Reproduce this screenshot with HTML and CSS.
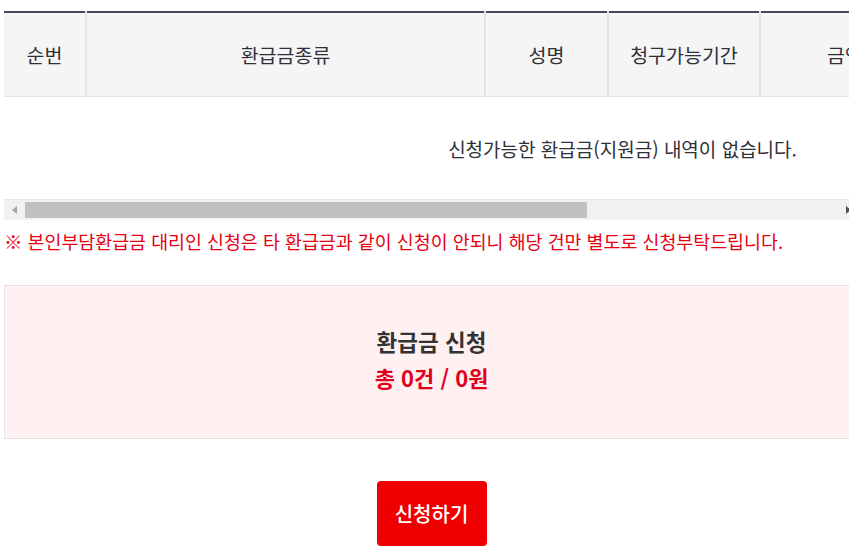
FILE: index.html
```html
<!DOCTYPE html>
<html lang="ko">
<head>
  <meta charset="UTF-8" />
  <meta name="viewport" content="width=device-width, initial-scale=1.0"/>
  <title>환급금 신청</title>
  <link rel="stylesheet" href="styles.css">
</head>
<body>
  <div class="contenedor">
    <div class="tabla-scroll">
      <table class="tabla">
        <colgroup>
          <col style="width:82px">
          <col style="width:399px">
          <col style="width:123px">
          <col style="width:152px">
          <col style="width:170px">
          <col style="width:150px">
          <col style="width:161px">
        </colgroup>
        <thead>
          <tr>
            <th>순번</th>
            <th>환급금종류</th>
            <th>성명</th>
            <th>청구가능기간</th>
            <th>금액</th>
            <th>지급예정일</th>
            <th>선택</th>
          </tr>
        </thead>
        <tbody>
          <tr>
            <td colspan="7" class="vacio">신청가능한 환급금(지원금) 내역이 없습니다.</td>
          </tr>
        </tbody>
      </table>
    </div>
    <div class="barra">
      <span class="barra-btn"><i class="flecha-izq"></i></span>
      <span class="barra-pulgar"></span>
      <span class="barra-btn"><i class="flecha-der"></i></span>
    </div>

    <p class="aviso">※ 본인부담환급금 대리인 신청은 타 환급금과 같이 신청이 안되니 해당 건만 별도로 신청부탁드립니다.</p>

    <div class="resumen">
      <strong class="resumen-titulo">환급금 신청</strong>
      <p class="resumen-total">총 0건 / 0원</p>
    </div>

    <div class="botones">
      <button class="btn-solicitar">신청하기</button>
    </div>
  </div>
</body>
</html>
```

FILE: styles.css
```css
html, body {
  overflow: hidden;
}

body {
  margin: 0;
  font-family: "Noto Sans CJK KR", "Noto Sans", sans-serif;
  color: #333;
  background-color: #fff;
}

.contenedor {
  width: 855px;
  margin-left: 4px;
  padding-top: 11px;
}

.tabla-scroll {
  overflow: hidden;
}

.tabla {
  width: 1237px;
  border-collapse: collapse;
  table-layout: fixed;
  border-top: 2px solid #45475a;
}

.tabla th {
  height: 83px;
  padding: 0;
  background-color: #f5f5f5;
  border-left: 2px solid #e3e3e8;
  border-bottom: 1px solid #e2e2e6;
  font-size: 19.5px;
  font-weight: 400;
  color: #2f2f38;
  text-align: center;
}

.tabla th:first-child {
  border-left: none;
}

.vacio {
  height: 102px;
  padding: 0;
  text-align: center;
  font-size: 19px;
  color: #2f2f38;
}

/* barra de desplazamiento dibujada */
.barra {
  display: flex;
  height: 20px;
  background-color: #f1f1f1;
  border-top: 1px solid #e6e6e6;
}

.barra-btn {
  width: 21px;
  display: flex;
  align-items: center;
  justify-content: center;
}

.barra-btn:last-child {
  margin-left: auto;
}

.flecha-izq {
  border-top: 4.5px solid transparent;
  border-bottom: 4.5px solid transparent;
  border-right: 5px solid #a3a3a3;
}

.flecha-der {
  border-top: 4.5px solid transparent;
  border-bottom: 4.5px solid transparent;
  border-left: 5px solid #505050;
}

.barra-pulgar {
  width: 562px;
  height: 16px;
  margin-top: 2px;
  background-color: #c1c1c1;
}

.aviso {
  margin: 9px 0 0;
  font-size: 18.4px;
  line-height: 24px;
  color: #e60012;
}

.resumen {
  margin-top: 32px;
  padding: 37px 0 43px;
  background-color: #fff0f1;
  border: 1px solid #e6e1e4;
  text-align: center;
}

.resumen-titulo {
  display: block;
  font-size: 22.5px;
  line-height: 36px;
  color: #333;
}

.resumen-total {
  margin: 0;
  font-size: 22px;
  line-height: 36px;
  font-weight: 700;
  color: #e0001b;
}

.botones {
  margin-top: 42px;
  text-align: center;
}

.btn-solicitar {
  width: 110px;
  height: 65px;
  padding: 0;
  font-family: inherit;
  font-size: 20px;
  font-weight: 500;
  color: #fff;
  background-color: #ef0000;
  border: none;
  border-radius: 4px;
  cursor: pointer;
}
```
